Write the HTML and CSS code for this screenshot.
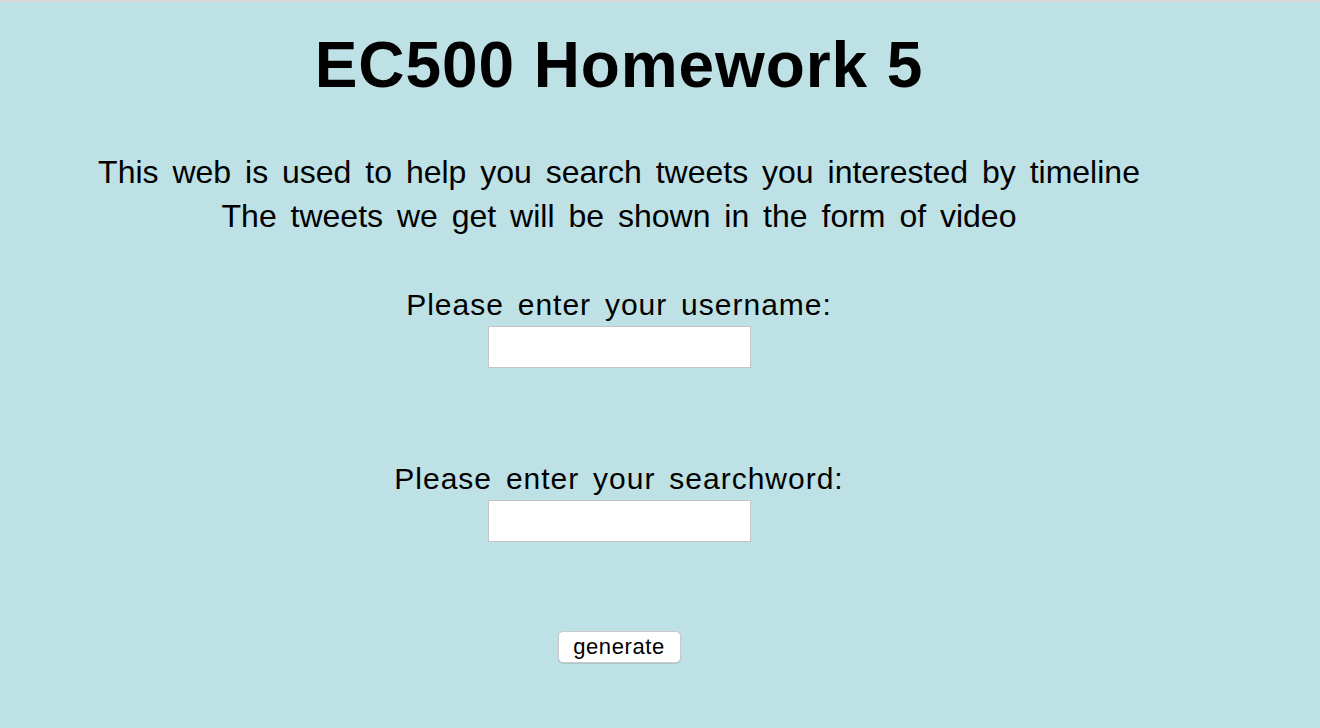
FILE: index.html
```html
<!DOCTYPE html>
<html>
<head>
<meta charset="utf-8">
<title>EC500 Homework 5</title>
<link rel="stylesheet" href="styles.css">
</head>
<body>
<div class="topbar"></div>
<main class="page">
  <h1 class="title">EC500 Homework 5</h1>
  <p class="intro">This web is used to help you search tweets you interested by timeline<br>The tweets we get will be shown in the form of video</p>
  <form class="form">
    <div class="field">
      <label class="label" for="username">Please enter your username:</label>
      <input class="input" id="username" type="text">
    </div>
    <div class="field field-second">
      <label class="label" for="searchword">Please enter your searchword:</label>
      <input class="input" id="searchword" type="text">
    </div>
    <button class="button" type="button">generate</button>
  </form>
</main>
</body>
</html>
```
FILE: styles.css
```css
html, body {
  margin: 0;
  padding: 0;
  background: #bee1e5;
  height: 100%;
}
body {
  font-family: "Liberation Sans", Arial, sans-serif;
  color: #000;
}
.topbar {
  height: 2px;
  background: #d8d8d8;
}
.page {
  width: 1238px;
  text-align: center;
  display: flex;
  flex-direction: column;
  align-items: center;
}
.title {
  margin: 26px 0 0;
  font-size: 64px;
  line-height: 74px;
  font-weight: bold;
  letter-spacing: 0.9px;
}
.intro {
  margin: 48px 0 0;
  font-size: 32px;
  line-height: 44px;
  word-spacing: 5px;
}
.form {
  display: flex;
  flex-direction: column;
  align-items: center;
  margin-top: 49px;
}
.field {
  display: flex;
  flex-direction: column;
  align-items: center;
  gap: 3px;
}
.field-second {
  margin-top: 93px;
}
.label {
  font-size: 30px;
  line-height: 36px;
  letter-spacing: 1px;
  word-spacing: 4.5px;
}
.input {
  box-sizing: border-box;
  width: 263px;
  height: 42px;
  margin: 0;
  border: 1px solid #c4c4c4;
  background: #fff;
  padding: 0 4px;
  font-size: 18px;
}
.button {
  margin-top: 89px;
  box-sizing: border-box;
  width: 123px;
  height: 32px;
  padding: 0;
  background: #fff;
  border: 1px solid #c9c9c9;
  border-radius: 5px;
  box-shadow: 0 1px 1px rgba(0,0,0,0.12);
  font-family: "Liberation Sans", Arial, sans-serif;
  font-size: 22px;
  letter-spacing: 0.6px;
  color: #000;
}
```
